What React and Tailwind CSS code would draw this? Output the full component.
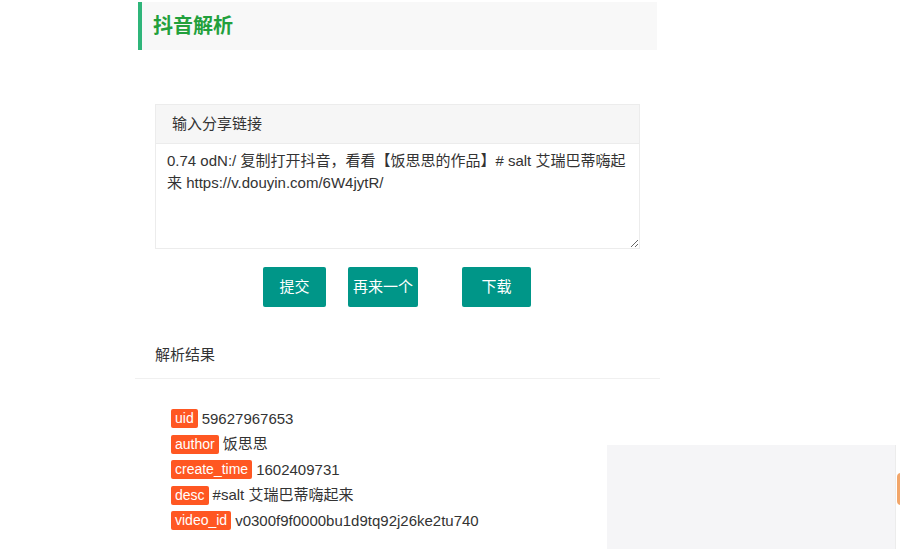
import React from "react";

const font = { fontFamily: '"Liberation Sans", Arial, "Noto Sans CJK SC", sans-serif' };

const rows = [
  ["uid", "59627967653"],
  ["author", "饭思思"],
  ["create_time", "1602409731"],
  ["desc", "#salt 艾瑞巴蒂嗨起来"],
  ["video_id", "v0300f9f0000bu1d9tq92j26ke2tu740"],
];

export default function App() {
  return (
    <div
      className="relative w-[900px] h-[549px] overflow-hidden bg-white text-[#333]"
      style={font}
    >
      <div className="ml-[135px] w-[525px] flex flex-col">
        <div className="mt-[2px] ml-[3px] w-[519px] h-[48px] border-l-[4px] border-[#2fb57a] bg-[#f8f8f8] pl-[11px] flex items-center">
          <h1 className="text-[20px] font-bold text-[#22a03c]">抖音解析</h1>
        </div>

        <div className="mt-[54px] ml-[20px] w-[485px] border border-[#ececec] flex flex-col">
          <div className="h-[39px] bg-[#f6f6f6] border-b border-[#ececec] pl-[16px] flex items-center text-[15px]">
            输入分享链接
          </div>
          <textarea
            readOnly
            className="block w-full h-[104px] resize-y pl-[11px] pr-[8px] py-[6px] leading-[22px] text-[15px] text-[#333] outline-none bg-white"
            style={font}
            defaultValue="0.74 odN:/ 复制打开抖音，看看【饭思思的作品】# salt 艾瑞巴蒂嗨起来 https://v.douyin.com/6W4jytR/"
          />
        </div>

        <div className="mt-[18px] pl-[128px] flex">
          <button className="w-[63px] h-[40px] bg-[#009688] text-white text-[15px] rounded-[2px]">提交</button>
          <button className="ml-[22px] w-[70px] h-[40px] bg-[#009688] text-white text-[15px] rounded-[2px]">再来一个</button>
          <button className="ml-[44px] w-[69px] h-[40px] bg-[#009688] text-white text-[15px] rounded-[2px]">下载</button>
        </div>

        <div className="mt-[37px] h-[35px] pl-[20px] border-b border-[#f0f0f0] text-[15px] leading-[22px]">
          解析结果
        </div>

        <div className="mt-[27px] pl-[36px] flex flex-col">
          {rows.map(([k, v]) => (
            <div key={k} className="h-[25.5px] flex items-center">
              <span className="h-[19px] leading-[19px] px-[4px] bg-[#ff5722] text-white text-[14px] rounded-[2px]">{k}</span>
              <span className="ml-[4px] text-[15px]">{v}</span>
            </div>
          ))}
        </div>
      </div>

      <div className="absolute left-[607px] top-[445px] w-[288px] h-[104px] bg-[#f5f5f7]" />
      <div className="absolute left-[895px] top-[445px] w-[1px] h-[104px] bg-[#ececec]" />
      <div className="absolute left-[897px] top-[473px] w-[4px] h-[32px] bg-[#f2a66a] rounded-l-full" />
    </div>
  );
}
